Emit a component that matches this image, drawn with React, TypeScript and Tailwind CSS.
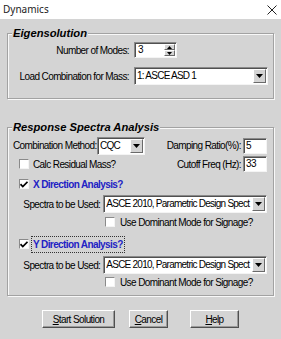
import React from "react";

const Sunken = ({ className = "", children }: { className?: string; children?: React.ReactNode }) => (
  <div
    className={
      "flex items-center bg-white border border-t-[#8a8a8a] border-l-[#8a8a8a] border-b-[#f4f4f4] border-r-[#f4f4f4] shadow-[inset_1px_1px_0_#505050] " +
      className
    }
  >
    {children}
  </div>
);

const Arrow = ({ up = false }: { up?: boolean }) => (
  <svg width="5" height="3" viewBox="0 0 5 3">
    <path d={up ? "M0 3H5L2.5 0Z" : "M0 0H5L2.5 3Z"} fill="#000" />
  </svg>
);

const Select = ({ value, className = "" }: { value: string; className?: string }) => (
  <Sunken className={"h-[18px] pl-[2px] pr-[1px] " + className}>
    <span className="min-w-0 flex-1 overflow-hidden whitespace-nowrap leading-none tracking-[-0.75px]">{value}</span>
    <div className="flex h-[14px] w-[13px] shrink-0 items-center justify-center border border-t-white border-l-white border-b-[#6a6a6a] border-r-[#6a6a6a] bg-[#d4d4d4]">
      <svg width="7" height="4" viewBox="0 0 7 4">
        <path d="M0 0H7L3.5 4Z" fill="#000" />
      </svg>
    </div>
  </Sunken>
);

const Check = ({ checked = false }: { checked?: boolean }) => (
  <div className="flex h-[10px] w-[10px] shrink-0 items-center justify-center bg-white border border-t-[#8a8a8a] border-l-[#8a8a8a] border-b-[#f4f4f4] border-r-[#f4f4f4]">
    {checked && (
      <svg width="8" height="7" viewBox="0 0 8 7">
        <path d="M0.5 3.2L2.8 5.5L7.5 0.8" stroke="#000" strokeWidth="1.7" fill="none" />
      </svg>
    )}
  </div>
);

const Button = ({ label, hot, width }: { label: string; hot: string; width: string }) => (
  <button
    className={
      "flex h-[18px] items-center justify-center border border-t-white border-l-white border-b-[#505050] border-r-[#505050] bg-[#d4d4d4] shadow-[inset_-1px_-1px_0_#9a9a9a] text-black " +
      width
    }
  >
    <span className="whitespace-nowrap">
      <span className="underline">{hot}</span>
      {label}
    </span>
  </button>
);

const Group = ({ title, className = "", children }: { title: string; className?: string; children: React.ReactNode }) => (
  <div
    className={
      "relative border border-[#a2a2a2] shadow-[inset_1px_1px_0_#f8f8f8,1px_1px_0_#f8f8f8] " + className
    }
  >
    <span className="absolute -top-[8px] left-[4px] whitespace-nowrap bg-[#d4d4d4] px-[1px] text-[11.2px] font-bold italic leading-[14px] tracking-normal text-black">
      {title}
    </span>
    {children}
  </div>
);

export default function App() {
  return (
    <div className="h-[339px] w-[281px] overflow-hidden whitespace-nowrap bg-[#d4d4d4] font-['Liberation_Sans',Arial,sans-serif] text-[10px] tracking-[-0.6px] text-black">
      {/* title bar */}
      <div className="flex h-[19px] items-center justify-between bg-white pl-[3px] pr-[4px]">
        <span className="font-['Noto_Sans',sans-serif] text-[10px] tracking-normal text-[#222]">Dynamics</span>
        <svg width="10" height="10" viewBox="0 0 10 10">
          <path d="M0.5 0.5L9.5 9.5M9.5 0.5L0.5 9.5" stroke="#222" strokeWidth="1" />
        </svg>
      </div>

      <div className="px-[7px]">
        <Group title="Eigensolution" className="mt-[14px] h-[66px] pt-[8px]">
          <div className="flex h-[16px] items-center">
            <span className="w-[126px] pr-[5px] text-right">Number of Modes:</span>
            <Sunken className="h-[16px] w-[43px] pl-[3px] pr-[1px]">
              <span className="flex-1 leading-none">3</span>
              <div className="flex h-[12px] w-[11px] flex-col">
                <div className="flex h-[6px] items-center justify-center border border-t-white border-l-white border-b-[#6a6a6a] border-r-[#6a6a6a] bg-[#d4d4d4]">
                  <Arrow up />
                </div>
                <div className="flex h-[6px] items-center justify-center border border-t-white border-l-white border-b-[#6a6a6a] border-r-[#6a6a6a] bg-[#d4d4d4]">
                  <Arrow />
                </div>
              </div>
            </Sunken>
          </div>
          <div className="mt-[9px] flex h-[18px] items-center">
            <span className="w-[126px] pr-[5px] text-right">Load Combination for Mass:</span>
            <Select value="1: ASCE ASD 1" className="w-[134px]" />
          </div>
        </Group>

        <Group title="Response Spectra Analysis" className="mt-[28px] h-[169px] pt-[8px] pl-[5px] pr-[6px]">
          <div className="flex h-[19px] items-center">
            <span className="w-[84px]">Combination Method:</span>
            <Select value="CQC" className="w-[48px]" />
            <span className="flex-1 pr-[2px] text-right">Damping Ratio(%):</span>
            <Sunken className="h-[16px] w-[24px] pl-[2px]">
              <span className="leading-none">5</span>
            </Sunken>
          </div>
          <div className="mt-[1px] flex h-[16px] items-center">
            <div className="ml-[6px]">
              <Check />
            </div>
            <span className="ml-[4px]">Calc Residual Mass?</span>
            <span className="flex-1 pr-[2px] text-right">Cutoff Freq (Hz):</span>
            <Sunken className="h-[16px] w-[24px] pl-[2px]">
              <span className="leading-none">33</span>
            </Sunken>
          </div>

          <div className="mt-[6px] flex h-[12px] items-center">
            <div className="ml-[6px]">
              <Check checked />
            </div>
            <span className="ml-[4px] font-bold text-[#2222c4]">X Direction Analysis?</span>
          </div>
          <div className="mt-[5px] flex h-[18px] items-center">
            <span className="w-[91px] pr-[3px] text-right">Spectra to be Used:</span>
            <Select value="ASCE 2010, Parametric Design Spect" className="w-[165px]" />
          </div>
          <div className="mt-[3px] flex h-[12px] items-center">
            <div className="ml-[92px]">
              <Check />
            </div>
            <span className="ml-[5px]">Use Dominant Mode for Signage?</span>
          </div>

          <div className="mt-[10px] flex h-[12px] items-center">
            <div className="ml-[6px]">
              <Check checked />
            </div>
            <span className="ml-[3px] px-[1px] font-bold text-[#2222c4] outline-1 outline-dotted outline-[#333]">
              Y Direction Analysis?
            </span>
          </div>
          <div className="mt-[6px] flex h-[18px] items-center">
            <span className="w-[91px] pr-[3px] text-right">Spectra to be Used:</span>
            <Select value="ASCE 2010, Parametric Design Spect" className="w-[165px]" />
          </div>
          <div className="mt-[2px] flex h-[12px] items-center">
            <div className="ml-[92px]">
              <Check />
            </div>
            <span className="ml-[5px]">Use Dominant Mode for Signage?</span>
          </div>
        </Group>

        <div className="mt-[14px] flex pl-[35px]">
          <Button hot="S" label="tart Solution" width="w-[73px]" />
          <div className="ml-[14px]">
            <Button hot="C" label="ancel" width="w-[39px]" />
          </div>
          <div className="ml-[22px]">
            <Button hot="H" label="elp" width="w-[49px]" />
          </div>
        </div>
      </div>
    </div>
  );
}
